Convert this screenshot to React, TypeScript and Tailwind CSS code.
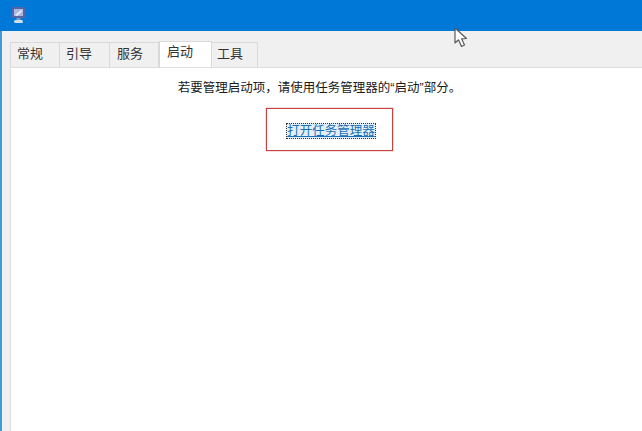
const font = "font-['Liberation_Sans','Noto_Sans_CJK_SC',sans-serif]"

const tabs = [
  { label: '常规', width: 'w-[50px]', pad: 'pl-[6px]' },
  { label: '引导', width: 'w-[50px]', pad: 'pl-[6px]' },
  { label: '服务', width: 'w-[49px]', pad: 'pl-[7px]' },
]

export default function App() {
  return (
    <div className={`relative flex h-[431px] w-[642px] flex-col overflow-hidden bg-white ${font}`}>
      {/* Title bar */}
      <div className="flex h-[31px] shrink-0 items-center bg-[#0078d7] pb-[2px] pl-[10px]">
        <svg width="18" height="20" viewBox="0 0 18 20">
          <rect x="2" y="2" width="13" height="11" rx="1.5" fill="#5566a8" />
          <rect x="4" y="4" width="9" height="7" fill="#a9b8dc" />
          <path d="M5 10 L11 5 L12.5 6 L7 11 Z" fill="#e6ebf6" />
          <rect x="6.5" y="13" width="4" height="2" fill="#7f9cb4" />
          <rect x="4" y="15" width="9" height="3" rx="1.5" fill="#cfe0e8" />
        </svg>
      </div>

      <div className="flex min-h-0 flex-1 border-l-2 border-[#3f9bd8]">
        <div className="flex min-w-0 flex-1 flex-col bg-[#f0f0f0]">
          {/* Tabs */}
          <div className="flex h-[36px] shrink-0 items-end pl-[8px] text-[13px] text-[#333333]">
            {tabs.map((tab) => (
              <div
                key={tab.label}
                className={`flex h-[25px] ${tab.width} ${tab.pad} items-center border border-b-0 border-l-0 border-[#d9d9d9] pb-[2px] first:border-l`}
              >
                {tab.label}
              </div>
            ))}
            <div className="flex h-[26px] w-[53px] items-start border border-b-0 border-[#d9d9d9] bg-white pt-[1px] pl-[7px] leading-[18px]">
              启动
            </div>
            <div className="flex h-[25px] w-[46px] items-center border border-b-0 border-l-0 border-[#d9d9d9] pb-[2px] pl-[5px]">
              工具
            </div>
          </div>

          {/* Startup page */}
          <div className="ml-[8px] flex min-h-0 flex-1 flex-col items-center border-t border-l border-[#dedede] bg-white pl-[3px]">
            <p className="mt-[12px] mr-[17px] text-[12.5px] leading-[17px] text-[#1a1a1a]">
              若要管理启动项，请使用任务管理器的“启动”部分。
            </p>
            <div className="mt-[11px] ml-[3px] flex h-[43px] w-[127px] items-center justify-center border border-[#c8413f] pt-[3px] pl-[3px] shadow-[0_0_1px_#c8413f]">
              <a className="border border-dotted border-[#333333] bg-[#e3eff8] text-[12.5px] leading-[14px] text-[#1a6fb5] underline">
                打开任务管理器
              </a>
            </div>
          </div>
        </div>
      </div>

      {/* Mouse pointer over the window */}
      <svg className="absolute top-[27px] left-[454px]" width="15" height="21" viewBox="0 0 15 21">
        <path
          d="M1 1 L1 16 L4.5 12.8 L7.5 19.5 L10.5 18 L7.6 11.8 L12.5 11.5 Z"
          fill="#ffffff"
          stroke="#5a5a5a"
          strokeWidth="1.2"
          strokeLinejoin="round"
        />
      </svg>
    </div>
  )
}
